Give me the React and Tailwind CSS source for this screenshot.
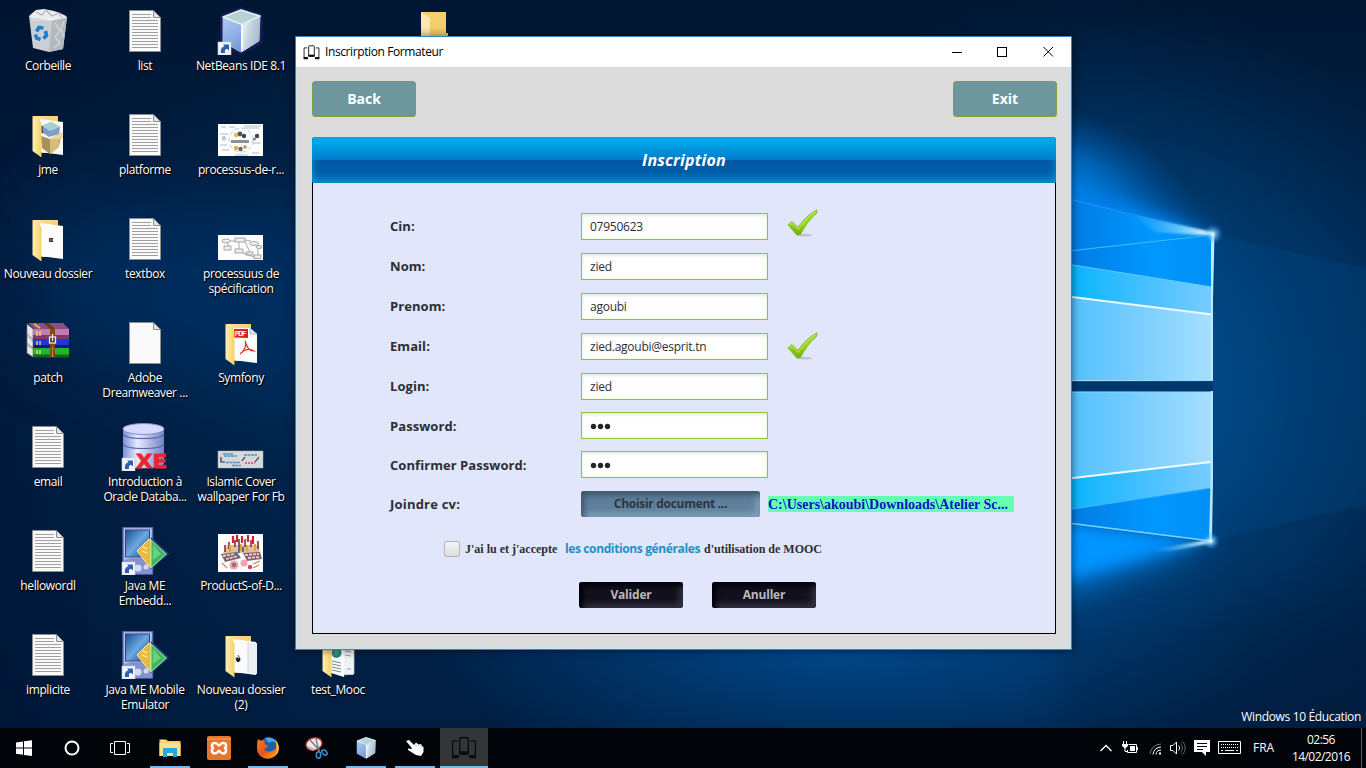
import React from "react";

/* ---------- Wallpaper and shared gradients ---------- */

function Wallpaper() {
  return (
    <svg className="absolute inset-0" width="1366" height="768" viewBox="0 0 1366 768">
      <defs>
        <linearGradient id="base" x1="0" y1="0" x2="0" y2="1">
          <stop offset="0" stopColor="#001733" />
          <stop offset="0.35" stopColor="#00274f" />
          <stop offset="0.6" stopColor="#00244a" />
          <stop offset="1" stopColor="#001d40" />
        </linearGradient>
        <linearGradient id="leftShade" x1="0" y1="0" x2="1" y2="0">
          <stop offset="0" stopColor="#001230" stopOpacity="0.55" />
          <stop offset="1" stopColor="#001230" stopOpacity="0" />
        </linearGradient>
        <radialGradient id="glowMid" gradientUnits="userSpaceOnUse" cx="1090" cy="390" r="400">
          <stop offset="0" stopColor="#0058a4" />
          <stop offset="0.35" stopColor="#004a88" stopOpacity="0.8" />
          <stop offset="0.7" stopColor="#004078" stopOpacity="0.4" />
          <stop offset="1" stopColor="#003060" stopOpacity="0" />
        </radialGradient>
        <radialGradient id="glowLow" gradientUnits="userSpaceOnUse" cx="0" cy="0" r="1" gradientTransform="translate(840 640) scale(420 150)">
          <stop offset="0" stopColor="#00498c" />
          <stop offset="1" stopColor="#00498c" stopOpacity="0" />
        </radialGradient>
        <radialGradient id="glowTop" gradientUnits="userSpaceOnUse" cx="0" cy="0" r="1" gradientTransform="translate(1050 190) rotate(14) scale(150 85)">
          <stop offset="0" stopColor="#0088f0" />
          <stop offset="0.5" stopColor="#0072d0" stopOpacity="0.7" />
          <stop offset="1" stopColor="#0050a0" stopOpacity="0" />
        </radialGradient>
        <linearGradient id="pane" x1="0" y1="0" x2="1" y2="0">
          <stop offset="0" stopColor="#4cc0ff" />
          <stop offset="0.5" stopColor="#78cdff" />
          <stop offset="1" stopColor="#a6dfff" />
        </linearGradient>
        <linearGradient id="paneCyan" x1="0" y1="0" x2="1" y2="0">
          <stop offset="0" stopColor="#00b4ff" />
          <stop offset="0.6" stopColor="#4cc0ff" />
          <stop offset="1" stopColor="#76cdff" />
        </linearGradient>
        <linearGradient id="paneBlue" x1="0" y1="0" x2="1" y2="0">
          <stop offset="0" stopColor="#0078e0" />
          <stop offset="0.6" stopColor="#0098ff" />
          <stop offset="1" stopColor="#0090f6" />
        </linearGradient>
        <linearGradient id="beam" x1="0" y1="0" x2="1" y2="0">
          <stop offset="0" stopColor="#40b0ff" stopOpacity="0" />
          <stop offset="0.6" stopColor="#7cd0ff" stopOpacity="0.8" />
          <stop offset="1" stopColor="#f4fcff" />
        </linearGradient>
        <radialGradient id="spark">
          <stop offset="0" stopColor="#fff" />
          <stop offset="0.25" stopColor="#9be0ff" stopOpacity="0.7" />
          <stop offset="1" stopColor="#1e90ff" stopOpacity="0" />
        </radialGradient>
        <filter id="b1"><feGaussianBlur stdDeviation="1" /></filter>
        <filter id="b8" x="-50%" y="-50%" width="200%" height="200%"><feGaussianBlur stdDeviation="7" /></filter>
        <filter id="b18" x="-50%" y="-50%" width="200%" height="200%"><feGaussianBlur stdDeviation="16" /></filter>
        <filter id="b40" x="-50%" y="-50%" width="200%" height="200%"><feGaussianBlur stdDeviation="36" /></filter>

        <linearGradient id="folder" x1="0" y1="0" x2="1" y2="0">
          <stop offset="0" stopColor="#fff0b0" />
          <stop offset="1" stopColor="#f5d069" />
        </linearGradient>
        <linearGradient id="folderBack" x1="0" y1="0" x2="1" y2="1">
          <stop offset="0" stopColor="#fbe59b" />
          <stop offset="1" stopColor="#eebd52" />
        </linearGradient>
        <linearGradient id="cubeL" x1="0" y1="0" x2="0.6" y2="1">
          <stop offset="0" stopColor="#b9d2f8" />
          <stop offset="1" stopColor="#6f94d6" />
        </linearGradient>
        <linearGradient id="cubeR" x1="0" y1="0" x2="1" y2="0.4">
          <stop offset="0" stopColor="#f0f7fc" />
          <stop offset="0.5" stopColor="#c5d5e2" />
          <stop offset="1" stopColor="#a8bccb" />
        </linearGradient>
        <linearGradient id="db" x1="0" y1="0" x2="1" y2="0">
          <stop offset="0" stopColor="#7f90d6" />
          <stop offset="0.35" stopColor="#e7ebff" />
          <stop offset="1" stopColor="#7484c6" />
        </linearGradient>
        <linearGradient id="screen" x1="0" y1="0" x2="1" y2="1">
          <stop offset="0" stopColor="#1b4c92" />
          <stop offset="0.5" stopColor="#6da9e0" />
          <stop offset="1" stopColor="#123c80" />
        </linearGradient>
        <linearGradient id="tick" x1="0" y1="0" x2="0" y2="1">
          <stop offset="0" stopColor="#a5dc3c" />
          <stop offset="0.5" stopColor="#9ad81e" />
          <stop offset="1" stopColor="#6fae0c" />
        </linearGradient>
        <linearGradient id="fox" x1="0" y1="0" x2="1" y2="1">
          <stop offset="0" stopColor="#f08018" />
          <stop offset="0.5" stopColor="#e8541c" />
          <stop offset="1" stopColor="#ffb020" />
        </linearGradient>
      </defs>
      <rect width="1366" height="768" fill="url(#base)" />
      <rect width="1366" height="768" fill="url(#glowMid)" />
      <rect width="1366" height="768" fill="url(#glowLow)" />
      <rect width="300" height="768" fill="url(#leftShade)" />
      <path d="M40 200L340 210V420L40 350Z" fill="#004080" opacity="0.35" filter="url(#b40)" />
      <path d="M1213 235L1366 268V505L1211 541Z" fill="#0060a8" opacity="0.16" />
      <path d="M1060 640L1366 590V768H1060Z" fill="#001a3a" opacity="0.25" filter="url(#b18)" />

      <rect x="1000" y="60" width="300" height="300" fill="url(#glowTop)" />
      <path d="M1030 175L1213 234L1030 250Z" fill="#007fe6" filter="url(#b18)" />
      <path d="M1030 175L1211 234L1030 250Z" fill="#0080ea" filter="url(#b8)" />
      <path d="M1030 525L1212 541L1030 602Z" fill="#007fe6" filter="url(#b18)" />
      <path d="M1040 520L1208 541L1040 584Z" fill="#0094ff" filter="url(#b8)" />

      <path d="M1060 198L1212 234L1060 253Z" fill="url(#paneBlue)" />
      <path d="M1060 197L1212 233.500" stroke="#30a4ff" strokeWidth="1" opacity="0.7" />
      <path d="M1130 214L1213 232V236L1155 232Z" fill="url(#beam)" filter="url(#b1)" />
      <path d="M1060 252L1212 235V287L1060 264Z" fill="url(#paneBlue)" />
      <path d="M1060 263L1212 287V315L1060 295Z" fill="url(#paneCyan)" />
      <path d="M1060 296L1212 315V381H1060Z" fill="url(#pane)" />
      <path d="M1060 252L1212 235" stroke="#3cc0ff" strokeWidth="1.2" />
      <path d="M1060 263L1212 287" stroke="#62ccff" strokeWidth="1" />
      <path d="M1060 295.500L1212 314.500" stroke="#effaff" strokeWidth="2.200" />
      <path d="M1211 235H1214.500L1213 300V381H1211Z" fill="#bdebff" />
      <path d="M1060 380.500H1213" stroke="#9adcff" strokeWidth="1" />

      <rect x="1060" y="382" width="153" height="9.500" fill="#00386e" />
      <path d="M1060 392H1212V462L1060 479Z" fill="url(#pane)" />
      <path d="M1060 479L1211 462V488L1060 511Z" fill="url(#paneCyan)" />
      <path d="M1060 511L1211 488V541L1060 523Z" fill="url(#paneBlue)" />
      <path d="M1060 479.500L1211 462" stroke="#f4fbff" strokeWidth="2" />
      <path d="M1060 511L1211 488" stroke="#3cb8ff" strokeWidth="1" />
      <path d="M1060 522L1211 541" stroke="#7bd2ff" strokeWidth="1.300" />
      <path d="M1150 550L1212 539V543L1170 551Z" fill="url(#beam)" filter="url(#b1)" />
      <path d="M1210.500 391H1213V480L1212 541H1209L1210.500 480Z" fill="#b4e8ff" />
      <path d="M1060 392H1213" stroke="#8fd8ff" strokeWidth="1" />
      <circle cx="1213" cy="234" r="10" fill="url(#spark)" />
      <circle cx="1211" cy="541" r="9" fill="url(#spark)" />
    </svg>
  );
}

/* ---------- Desktop icons (48x48) ---------- */

function Shortcut() {
  return (
    <g>
      <rect x="1" y="35" width="13" height="13" fill="#f4f6fa" stroke="#c9ced8" strokeWidth="0.6" />
      <path d="M4 46C3.500 42 5 39.800 7.500 39.600L6 37.500H12V43.500L10 41.800C8 42 7.600 43.500 8 46Z" fill="#2c5fb0" />
    </g>
  );
}

function Svg({ children }) {
  return (
    <svg className="shrink-0" width="48" height="48" viewBox="0 0 48 48">
      {children}
    </svg>
  );
}

function Page({ lines }) {
  return (
    <Svg>
      <path d="M8.500 3.500H32.500L39.500 10.500V44.500H8.500Z" fill="#fafafa" stroke="#8e8e8e" />
      <path d="M32.500 3.500V10.500H39.500Z" fill="#dfe3e8" stroke="#8e8e8e" />
      {lines && (
        <path
          d="M11 7.500H30M11 10.500H30M11 13.500H37M11 16.500H37M11 19.500H37M11 22.500H37M11 25.500H37M11 28.500H37M11 31.500H37M11 34.500H37M11 37.500H37M11 40.500H37"
          stroke="#a0a0a0"
        />
      )}
    </Svg>
  );
}

function Cube() {
  return (
    <g>
      <path d="M6 10L24 3L43 9L42 34L24 45L6 35Z" fill="url(#cubeL)" stroke="#9db7e6" strokeWidth="1" strokeLinejoin="round" />
      <path d="M25 18L43 10L42 34L25 45Z" fill="url(#cubeR)" />
      <path d="M6 10L24 3L43 9L25 17.500Z" fill="#b5d3d3" stroke="#e4f1f6" strokeWidth="1.500" strokeLinejoin="round" />
      <path d="M25 18V44" stroke="#f5fbff" strokeWidth="2" />
    </g>
  );
}

function NetBeans() {
  return (
    <Svg>
      <path d="M3 8L24 0L46 7L45 37L24 48L3 38Z" fill="#25206a" opacity="0.6" />
      <Cube />
      <Shortcut />
    </Svg>
  );
}

function Bin() {
  return (
    <Svg>
      <path d="M6 8L12 3L20 2L30 4L36 6L42 9L40 14H8Z" fill="#e9ebed" />
      <path d="M12 5L18 8L22 3L28 9L35 6L38 11" fill="none" stroke="#b0b5ba" strokeWidth="1.200" />
      <path d="M5 9L9 41L25 45L39 42L43 10L28 13Z" fill="#d6d9dc" opacity="0.95" />
      <path d="M28 13L43 10L39 42L25 45Z" fill="#b4b9be" />
      <path d="M31 16L36 24L31 30L36 36L30 41M40 14L37 22L40 30" fill="none" stroke="#d0d4d8" strokeWidth="1.500" />
      <path d="M5 9L28 13L43 10" fill="none" stroke="#f4f5f6" />
      <g fill="none" stroke="#1480d8" strokeWidth="3.600">
        <path d="M12.500 24.500L15 20.500L19.500 21" />
        <path d="M21.500 24L22.500 28.500L19.500 31.500" />
        <path d="M16.500 32.500L12.500 31L11.500 27.500" />
      </g>
    </Svg>
  );
}

function FolderBase({ children, front = true }) {
  return (
    <Svg>
      <path d="M9 5H34V42H18Z" fill="url(#folderBack)" />
      {children}
      {front && <path d="M8.500 5L17.500 12V46.500L8.500 40Z" fill="url(#folder)" />}
    </Svg>
  );
}

function FolderJme() {
  return (
    <FolderBase>
      <path d="M16 8L39 11V44L16 41Z" fill="#f8f8f8" />
      <path d="M18 15L27 11L36 16L35 23L25 26L19 22Z" fill="#7d9fc4" />
      <path d="M18 15L27 11L36 16L26 20Z" fill="#a9cfd2" />
      <path d="M18 15V21L19 22" stroke="#333" strokeWidth="1.500" fill="none" />
      <path d="M17 25L26 28L38 21L35 35L26 43L18 37Z" fill="#a98f5a" />
      <path d="M26 28L38 21L39 27L29 32Z" fill="#ecd79c" />
      <path d="M26 28V43L35 36V28Z" fill="#d6bc78" />
    </FolderBase>
  );
}

function FolderPlain({ mark }) {
  return (
    <FolderBase>
      <path d="M16 8L39 11V44L16 41Z" fill="#fbfbfb" />
      {mark === "dot" && <path d="M25 23H29V27H25Z" fill="#473c42" />}
      {mark === "dot" && <path d="M26 24H28V26H26Z" fill="#a05068" />}
      {mark === "apple" && (
        <g>
          <path d="M31 11L40 12V43L31 42Z" fill="#eceff2" />
          <path d="M31 11V43" stroke="#d8d8d8" />
          <path d="M18.500 28L20 26L21.500 27L23 26L23.500 29L22 31L20 31Z" fill="#222" />
          <path d="M21 24L22 26" stroke="#444" />
        </g>
      )}
      {mark === "docs" && (
        <g>
          <path d="M29 10L40 12V43L29 44Z" fill="#f0f3f6" stroke="#c4c9ce" strokeWidth="0.7" />
          <path d="M31 20L37 21M31 24L37 25M33 38H37" stroke="#9298a0" />
          <path d="M17 11L30 13V46L17 42Z" fill="#fcfdfd" />
          <circle cx="22.500" cy="22" r="5" fill="#2b8294" />
          <path d="M20 18L25 20L22 25Z" fill="#49a860" />
          <path d="M18 30L27 32M18 33L27 35M18 36L27 38M18 39L27 41" stroke="#7d838a" />
        </g>
      )}
    </FolderBase>
  );
}

function FolderPdf() {
  return (
    <FolderBase>
      <path d="M16 9L33 9L40 15V44L16 41Z" fill="#fbfbfb" />
      <path d="M33 9V15H40" fill="#e4e4e4" stroke="#aaa" strokeWidth="0.700" />
      <path d="M17 10L31 10V19L17 18.500Z" fill="#dc2317" />
      <text x="18" y="17" fontSize="6.500" fontWeight="700" fontFamily="Liberation Sans, sans-serif" textLength="11" fill="#fff">PDF</text>
      <path d="M28 22C31 30 32 32 37 32C32 29 27 31 23 35C27 33 30 26 28 22Z" fill="none" stroke="#dc3327" strokeWidth="1.200" />
    </FolderBase>
  );
}

function FolderClosed() {
  return (
    <Svg>
      <path d="M11 5H36V26H38V46H11Z" fill="#f3cf6d" />
      <path d="M11 5L20 11V46L11 40Z" fill="#fde9ae" />
    </Svg>
  );
}

function Thumb({ y, children }) {
  return (
    <Svg>
      <rect x="1" y={y} width="45" height={45 - y} fill="#fdfdfd" />
      {children}
    </Svg>
  );
}

function ThumbProcess() {
  return (
    <Thumb y={13}>
      <circle cx="24" cy="29" r="12" fill="none" stroke="#b9cce0" strokeWidth="1" strokeDasharray="5 2" />
      <path d="M4 16H9M12 16H18M27 15H44M3 23H11M5 29H8M3 34H10M5 39H12M18 44H31M35 42H42M27 17H42M36 32H44" stroke="#ccd2d9" strokeWidth="1.600" />
      <path d="M14 30.500H32" stroke="#8d9196" strokeWidth="3" />
      <circle cx="19" cy="24" r="2.200" fill="#e0c040" /><circle cx="23" cy="23" r="2.400" fill="#555" /><circle cx="27" cy="25" r="2.200" fill="#444" />
      <circle cx="40" cy="25" r="2.200" fill="#444" /><circle cx="37.500" cy="28" r="1.600" fill="#888" />
      <circle cx="19" cy="37" r="2.200" fill="#e0b030" /><circle cx="23.500" cy="38" r="2.200" fill="#666" /><circle cx="28" cy="36" r="1.800" fill="#c8963c" />
      <circle cx="7" cy="27" r="2" fill="#a9c8e4" />
    </Thumb>
  );
}

function ThumbSpec() {
  return (
    <Thumb y={20}>
      <g fill="#eee" stroke="#888" strokeWidth="0.700">
        <ellipse cx="9" cy="26" rx="4" ry="2" /><rect x="18" y="23" width="10" height="4" />
        <rect x="7" y="31" width="7" height="4" /><rect x="18" y="34" width="8" height="4" />
        <ellipse cx="37" cy="28.500" rx="4.500" ry="2" /><rect x="29" y="37" width="7" height="3" /><rect x="37" y="40" width="7" height="3.500" />
        <ellipse cx="42" cy="32" rx="3" ry="1.500" />
        <path d="M13 26H18M28 25L34 26M22 27V34M11 28V31M28 27L33 37M26 38L37 42M41 34V40" fill="none" />
      </g>
    </Thumb>
  );
}

function ThumbIslamic() {
  return (
    <Svg>
      <rect x="1" y="28" width="45" height="17" fill="#d5d9dc" stroke="#aeb4b8" strokeWidth="0.5" />
      <path d="M6 31H16M7 33H20M27 32H40M9 39.500H23M15 42.500H24" stroke="#4f90be" strokeWidth="1.600" strokeDasharray="3 0.600" />
      <path d="M4 34V39H8M25 38L28 34M38 39L42 34" stroke="#333" strokeWidth="1.200" fill="none" />
      <path d="M28 40H38" stroke="#d36a84" strokeWidth="1.800" strokeDasharray="2 1" />
    </Svg>
  );
}

function ThumbProducts() {
  return (
    <Thumb y={7}>
      <path d="M10 18H42L43 26H6Z" fill="#dfc09d" />
      <path d="M16 9V16M20 8V15M25 9V16M31 8V15M36 9V17" stroke="#c42836" strokeWidth="2.200" />
      <path d="M18 13V20M22 12V20M28 12V20M34 13V20M12 15V22M41 14V22M8 18V25" stroke="#8c2c36" strokeWidth="1.600" />
      <path d="M13 18V25M24 17V24M38 17V24M30 18V24" stroke="#e7a03c" strokeWidth="2" />
      <path d="M4 27L20 25L24 31L8 35Z" fill="#75606c" /><path d="M26 26L43 25L45 32L30 34Z" fill="#846068" />
      <path d="M6 29L18 27M9 32L21 29M28 28L42 27M31 31L43 30" stroke="#f0cdd6" strokeWidth="1.800" strokeDasharray="3 1" />
      <path d="M22 20V26M26 20V25" stroke="#4466a8" strokeWidth="1.800" />
      <circle cx="17" cy="38" r="4.500" fill="#e0acb4" /><circle cx="17" cy="38" r="2.300" fill="#b4606f" />
      <circle cx="27" cy="36" r="3.500" fill="#f4a0b4" /><circle cx="33" cy="40" r="2.200" fill="#c84868" />
      <path d="M36 37L43 34M36 41L42 38M5 36L10 41" stroke="#c5906c" strokeWidth="1.300" />
    </Thumb>
  );
}

function WinRar() {
  return (
    <Svg>
      <path d="M3 5L9 10V22L3 17ZM3 15L9 20V30L3 26ZM3 24L9 29V38L3 34Z" fill="#e8e8ea" stroke="#777" strokeWidth="0.700" />
      <path d="M4 4H39L45 10H10Z" fill="#8d4f82" />
      <rect x="9" y="10" width="36" height="9" fill="#c37ab2" /><rect x="9" y="16" width="36" height="4" fill="#7d3b6c" />
      <rect x="9" y="20" width="36" height="8.500" fill="#2036d8" /><rect x="9" y="26" width="36" height="3" fill="#101a80" />
      <rect x="9" y="29" width="36" height="9" fill="#25b52c" /><rect x="9" y="35.500" width="36" height="3" fill="#0c6b14" />
      <path d="M13 12V17M16 12V17M13 22V26M16 22V26M13 31V35M16 31V35" stroke="#f3dc5c" strokeWidth="1.400" />
      <path d="M10 5L16 9" stroke="#d8c820" strokeWidth="2" />
      <path d="M19 4H25L31 10H26Z" fill="#6c3f12" /><rect x="26" y="10" width="5" height="28" fill="#7d4a18" />
      <path d="M28.500 28V38" stroke="#c48a40" />
      <rect x="25.500" y="18" width="6" height="6" fill="#553311" stroke="#e8e8e8" strokeWidth="1.300" />
      <path d="M28.500 15V22" stroke="#f3f3f3" strokeWidth="1.300" />
    </Svg>
  );
}

function OracleXe() {
  return (
    <Svg>
      <path d="M2 6V40C2 47 43 47 43 40V6Z" fill="url(#db)" />
      <ellipse cx="22.500" cy="6" rx="20.500" ry="5.500" fill="#d5dbfa" stroke="#8390c6" />
      <path d="M2 11C5 17 40 17 43 11M2 21C5 27 40 27 43 21" fill="none" stroke="#5664a4" strokeWidth="1.200" />
      <text x="15" y="44.500" fontSize="20" fontWeight="700" fontFamily="DejaVu Sans, sans-serif" textLength="31" lengthAdjust="spacingAndGlyphs" fill="#e82630" stroke="#e82630" strokeWidth="0.800">XE</text>
      <Shortcut />
    </Svg>
  );
}

function JavaMe() {
  return (
    <Svg>
      <path d="M2 0.500H31.500V47H2Z" fill="#b9c5ee" stroke="#5669ac" strokeWidth="1.400" />
      <rect x="4.500" y="3" width="24" height="27" fill="url(#screen)" stroke="#2d447e" />
      <path d="M2 34C12 29 22 29 31 34V47H2Z" fill="#8493cf" />
      <circle cx="17" cy="41" r="3.500" fill="#d3dcfa" /><circle cx="25" cy="40" r="2.500" fill="#d3dcfa" />
      <path d="M30 10L48 27L30 42Z" fill="#2a4a84" />
      <path d="M16 24L28 12L30 13V40L27 38Z" fill="#e9b93c" stroke="#fbe9a8" />
      <path d="M22 20L26 22M21 24L26 26" stroke="#fff4c8" strokeWidth="1.300" />
      <path d="M30 13L45 27L30 41Z" fill="#3eb85a" stroke="#a4ecb0" />
      <path d="M32 18L40 27L32 33Z" fill="#80dc8e" opacity="0.7" />
      <Shortcut />
    </Svg>
  );
}

const page = <Page lines />;
const desktop = [
  [{ icon: <Bin />, label: ["Corbeille"] }, { icon: page, label: ["list"] }, { icon: <NetBeans />, label: ["NetBeans IDE 8.1"] }, null, { icon: <FolderClosed />, label: [] }],
  [{ icon: <FolderJme />, label: ["jme"] }, { icon: page, label: ["platforme"] }, { icon: <ThumbProcess />, label: ["processus-de-r..."] }, null, null],
  [{ icon: <FolderPlain mark="dot" />, label: ["Nouveau dossier"] }, { icon: page, label: ["textbox"] }, { icon: <ThumbSpec />, label: ["processuus de", "spécification"] }, null, null],
  [{ icon: <WinRar />, label: ["patch"] }, { icon: <Page />, label: ["Adobe", "Dreamweaver ..."] }, { icon: <FolderPdf />, label: ["Symfony"] }, null, null],
  [{ icon: page, label: ["email"] }, { icon: <OracleXe />, label: ["Introduction à", "Oracle Databa..."] }, { icon: <ThumbIslamic />, label: ["Islamic Cover", "wallpaper For Fb"] }, null, null],
  [{ icon: page, label: ["hellowordl"] }, { icon: <JavaMe />, label: ["Java ME", "Embedd..."] }, { icon: <ThumbProducts />, label: ["ProductS-of-D..."] }, null, null],
  [{ icon: page, label: ["implicite"] }, { icon: <JavaMe />, label: ["Java ME Mobile", "Emulator"] }, { icon: <FolderPlain mark="apple" />, label: ["Nouveau dossier", "(2)"] }, { icon: <FolderPlain mark="docs" />, label: ["test_Mooc"] }, null],
];

function Desktop() {
  return (
    <div className="relative grid w-[480px] grid-cols-[96px_98px_94px_100px_92px] auto-rows-[104px]">
      {desktop.flat().map((item, i) => (
        <div key={i} className="flex flex-col items-center pt-[7px]">
          {item && item.icon}
          {item && (
            <div className="mt-[3px] flex flex-col items-center text-[12px] leading-[15px] tracking-[-0.38px] whitespace-nowrap text-white [text-shadow:0_1px_2px_#000,1px_1px_1px_#000]">
              {item.label.map((l) => <span key={l}>{l}</span>)}
            </div>
          )}
        </div>
      ))}
    </div>
  );
}

/* ---------- Application window ---------- */

function Phones({ className, size, color }) {
  return (
    <svg className={className} width={size} height={size} viewBox="0 0 24 24" fill="none" stroke={color}>
      <rect x="8" y="2.500" width="8" height="15" rx="1.200" strokeWidth="1.300" />
      <path d="M8 15.500H16V17.500H8Z" fill={color} />
      <path d="M6 5.500H1.500V20.500H7M18 5.500H22.500V20.500H17" strokeWidth="1.200" />
      <path d="M1 18.500H7V21.500H1ZM17 18.500H23V21.500H17Z" fill={color} strokeWidth="0" />
    </svg>
  );
}

function Tick({ className }) {
  return (
    <svg className={className} width="32" height="30" viewBox="0 0 32 30">
      <ellipse cx="17" cy="26.200" rx="8" ry="1.200" fill="#7c86a8" opacity="0.4" />
      <path d="M1 16L5 12.500L11 18.500C16 11 22 5 30 0.800V4C23 9.500 18 17 13.500 25.500L10 26Z" fill="url(#tick)" stroke="#7db824" strokeWidth="0.800" />
      <path d="M3 16L5 14.300L11 20.500C17 12.500 22 7 28 3" fill="none" stroke="#cdf17c" strokeWidth="1" opacity="0.8" />
    </svg>
  );
}

const fields = [
  { label: "Cin:", value: "07950623", tick: "mt-[-4px]", gap: "mb-[13px]" },
  { label: "Nom:", value: "zied", gap: "mb-[13px]" },
  { label: "Prenom:", value: "agoubi", gap: "mb-[13px]" },
  { label: "Email:", value: "zied.agoubi@esprit.tn", tick: "mt-[-1px]", gap: "mb-[13px]" },
  { label: "Login:", value: "zied", gap: "mb-[12px]" },
  { label: "Password:", dots: true, gap: "mb-[12px]" },
  { label: "Confirmer Password:", dots: true, gap: "mb-[13px]" },
];

function Field({ label, value, dots, tick, gap }) {
  return (
    <div className={`flex h-[27px] ${gap}`}>
      <div className={`w-[191px] text-[13px] font-bold tracking-[0.06px] ${dots ? "leading-[28px]" : "leading-[26px]"}`}>{label}</div>
      <div className="flex h-[27px] w-[187px] items-center border border-[#8cc63f] bg-white pl-2 text-[12px] tracking-[-0.25px] shadow-[inset_0_2px_3px_#e6ece2,inset_0_0_2px_#d8f09c]">
        {dots ? (
          <svg width="22" height="8" viewBox="0 0 22 8" fill="#262626">
            <circle cx="3.500" cy="4.500" r="2.700" /><circle cx="10.500" cy="4.500" r="2.700" /><circle cx="17.500" cy="4.500" r="2.700" />
          </svg>
        ) : (
          <span>{value}</span>
        )}
      </div>
      {tick && <Tick className={`ml-[19px] ${tick}`} />}
    </div>
  );
}

function TopButton({ children }) {
  return (
    <button className="h-9 w-[104px] rounded-[3px] border border-[#7da344] bg-[#6d979d] pb-px text-[14px] font-bold text-white shadow-[inset_0_-1px_0_#75996a]">
      {children}
    </button>
  );
}

function DarkButton({ children }) {
  return (
    <button className="h-[26px] w-[104px] rounded-[3px] bg-[#12101c] text-[12px] font-bold tracking-[-0.2px] text-[#b9b9bd] shadow-[inset_4px_4px_5px_#02010a,inset_-4px_-4px_6px_#343142]">
      {children}
    </button>
  );
}

function AppWindow() {
  return (
    <div className="absolute top-9 left-[295px] flex h-[614px] w-[777px] flex-col border border-[#3484c4] bg-[#dcdcdc] text-[#2c2e33] shadow-[0_0_9px_rgba(0,0,0,0.55)]">
      <div className="flex h-[30px] shrink-0 items-center bg-white pl-[7px] text-[12px] text-black">
        <Phones size={17} color="#111" />
        <span className="ml-[5px] tracking-[-0.4px]">Inscrirption Formateur</span>
        <svg className="ml-auto mr-4" width="104" height="12" viewBox="0 0 104 12" fill="none" stroke="#000">
          <path d="M1 6.500H11M92.500 1L102 10.500M102 1L92.500 10.500" />
          <rect x="46.500" y="1.500" width="9" height="9" />
        </svg>
      </div>
      <div className="flex grow flex-col border border-t-0 border-[#c6e6f6] pt-[14px] pr-[13px] pl-[15px]">
        <div className="flex justify-between">
          <TopButton>Back</TopButton>
          <TopButton>Exit</TopButton>
        </div>
        <div className="relative mt-5 flex h-[46px] w-[744px] items-center justify-center rounded-[3px] bg-[linear-gradient(180deg,#00b8f0_0%,#0096e0_25%,#007cc8_50%,#0058a4_50%,#005ca8_75%,#0078be_100%)] text-[16px] font-bold tracking-[0.22px] text-white italic shadow-[inset_0_0_8px_#00a0d8,inset_0_0_1px_#0a5c88]">
          Inscription
        </div>
        <div className="-mt-px h-[452px] w-[744px] border border-t-0 border-black bg-[#e1e6fa] pt-[31px] pl-[77px]">
          {fields.map((f) => <Field key={f.label} {...f} />)}
          <div className="flex h-[26px] items-center">
            <div className="w-[191px] pt-px text-[13px] font-bold tracking-[0.2px]">Joindre cv:</div>
            <button className="h-[26px] w-[179px] rounded-[3px] bg-[#5f809c] text-[12px] font-bold tracking-[-0.3px] text-[#2c3640] shadow-[inset_3px_4px_6px_#3c5268,inset_-4px_-4px_6px_#83a2bc]">
              Choisir document ...
            </button>
            <div className="ml-2 h-4 w-[246px] bg-[#66ffb4] font-['Liberation_Serif',serif] text-[14px] leading-[17px] font-bold whitespace-nowrap text-[#0a14c8]">
              C:\Users\akoubi\Downloads\Atelier Sc...
            </div>
          </div>
          <div className="mt-6 ml-[54px] flex h-4 items-center font-['Liberation_Serif',serif] text-[12px] leading-4 font-bold whitespace-nowrap">
            <span className="h-4 w-4 rounded-[2px] border border-[#b4b4b8] bg-linear-to-b from-[#f4f4f4] to-[#dedede]" />
            <span className="ml-[5px] w-[100px]">J'ai lu et j'accepte</span>
            <span className="w-[139px] font-['Open_Sans',sans-serif] tracking-[-0.38px] text-[#1e90c8]">les conditions générales</span>
            <span>d'utilisation de MOOC</span>
          </div>
          <div className="mt-[25px] ml-[189px] flex gap-[29px]">
            <DarkButton>Valider</DarkButton>
            <DarkButton>Anuller</DarkButton>
          </div>
        </div>
      </div>
    </div>
  );
}

/* ---------- Taskbar ---------- */

function Task({ icon, running, active }) {
  return (
    <div className={`relative flex h-10 w-12 items-center justify-center ${active ? "bg-[#333639]" : ""}`}>
      {icon}
      {running && <div className={`absolute bottom-0 h-[2px] bg-[#76b9ed] ${active ? "w-12" : "w-10"}`} />}
    </div>
  );
}

const T = ({ children }) => <svg width="24" height="24" viewBox="0 0 24 24" fill="none">{children}</svg>;

function Taskbar() {
  return (
    <div className="absolute bottom-0 left-0 flex h-10 w-full items-center bg-[#010408] text-[12px] text-white">
      <Task icon={<T><path d="M4 6.500L11 5.500V11.500H4ZM12 5.300L20 4.200V11.500H12ZM4 12.500H11V18.800L4 17.800ZM12 12.500H20V20L12 18.900Z" fill="#fff" /></T>} />
      <Task icon={<T><circle cx="12" cy="12" r="6.500" stroke="#fff" strokeWidth="2" /></T>} />
      <Task icon={<T><path d="M6.500 5.500H17.500V18.500H6.500ZM5 7.500H2.500V16.500H5M19 7.500H21.500V16.500H19" stroke="#fff" /></T>} />
      <div className="ml-[2px] flex gap-px">
        <Task running icon={<T><path d="M1.500 3.500H8L10 5H22.500V20H1.500Z" fill="#f6cf62" /><path d="M1.500 7H22.500V20H1.500Z" fill="#fde08a" /><path d="M5 12H19V21H15V17H9V21H5Z" fill="#23a8e4" /><path d="M3 4.500H7" stroke="#fff3c0" /></T>} />
        <Task icon={<T><rect width="24" height="24" rx="2" fill="#e5762a" /><path d="M0 3H24" stroke="#f6a368" /><path d="M8 7C4 7 4 11.500 7 12C4 12.500 4 17.500 8 17.500C11 17.500 10.500 15 12 15C13.500 15 13 17.500 16 17.500C20 17.500 20 12.500 17 12C20 11.500 20 7 16 7C13 7 13.500 9.500 12 9.500C10.500 9.500 11 7 8 7Z" stroke="#fff" strokeWidth="2.400" /></T>} />
        <Task running icon={<T><circle cx="13" cy="10.500" r="9.500" fill="#1d5fa8" /><path d="M9 2C13 1 19 2 21 7C17 5 15 5 13 7Z" fill="#4ba8dc" /><path d="M2 3C4 5 6 4 9 5C7 8 10 9 12 10C11 13 8 12 8 13C11 17 18 16 20 12C21 9 20 6 19 4C24 8 24 16 19 20C13 25 2 23 1 13C1 9 1 6 2 3Z" fill="url(#fox)" /><path d="M19 4C24 8 24 16 19 20C22 15 21 9 19 4Z" fill="#fcc33c" /></T>} />
        <Task icon={<T><ellipse cx="9" cy="8" rx="8" ry="6" transform="rotate(-15 9 8)" fill="#e8e8ea" stroke="#c83838" strokeWidth="1.300" /><path d="M3 11L9 14" stroke="#b3b7bc" strokeWidth="2" /><path d="M5 4L15 15M11 3L14 16" stroke="#707880" strokeWidth="1.300" /><ellipse cx="13.500" cy="19" rx="2.200" ry="3.200" stroke="#3592d4" strokeWidth="1.500" /><ellipse cx="19.500" cy="16.500" rx="3" ry="2" transform="rotate(45 19.500 16.500)" stroke="#3592d4" strokeWidth="1.500" /></T>} />
        <Task running icon={<svg width="24" height="24" viewBox="0 0 48 48"><Cube /></svg>} />
        <Task running icon={<T><path d="M3 5L6 4L11 9L13 6.500L15.500 8.500L18 8L19 10L20.500 11L20.500 16L18 20L13 19L5 14L5 12.500L9 13L8 11Z" fill="#fff" /><path d="M12 8.500L14 11M15 8.500L16.500 11M17.500 9L19 12" stroke="#a5a5a5" strokeWidth="0.600" /></T>} />
        <Task running active icon={<Phones size={26} color="#0a0b0c" />} />
      </div>
      <svg className="ml-auto" width="146" height="24" viewBox="1097 736 146 24" fill="none" stroke="#fff">
        <path d="M1100.500 751L1106 745.500L1111.500 751" strokeWidth="1.300" />
        <path d="M1128.500 744.500H1136.500V752.500H1127.500V750" /><path d="M1130 746H1135V751H1130Z" fill="#fff" stroke="none" /><path d="M1137.500 747V750M1123.500 741V744M1126.500 741V744M1125 747V751.500H1128" /><path d="M1122 744H1128V746L1125 748.500L1122 746Z" fill="#fff" stroke="none" />
        <path d="M1150 754A11 11 0 0 1 1161 744" stroke="#777" /><path d="M1153 754.500A8 8 0 0 1 1161 747" /><path d="M1156 754.500A5 5 0 0 1 1161 750" /><path d="M1159 752.500H1161V754.500H1159Z" fill="#fff" stroke="none" />
        <path d="M1170.500 745.500H1173L1176.500 742V754L1173 750.500H1170.500Z" /><path d="M1178.500 745.500C1180 747 1180 749 1178.500 750.500" /><path d="M1180.500 743.500C1183 746 1183 750 1180.500 752.500M1182.500 741.500C1186 745 1186 751 1182.500 754.500" stroke="#666" />
        <path d="M1194 740H1210V752H1206V756L1202 752H1194Z" fill="#fff" stroke="none" /><path d="M1197 743.500H1207M1197 746.500H1207M1197 749.500H1203" stroke="#010408" />
        <path d="M1218.500 741.500H1240.500V753.500H1218.500Z" /><path d="M1221 744.500H1239M1221 747.500H1239" strokeDasharray="1 1" /><path d="M1221 750.500H1223M1225 750.500H1234M1236 750.500H1238" />
      </svg>
      <span className="ml-[10px] w-[22px]">FRA</span>
      <div className="ml-[14px] flex w-[64px] flex-col items-center leading-[17px] tracking-[-0.55px]">
        <span>02:56</span>
        <span>14/02/2016</span>
      </div>
      <div className="ml-2 h-10 w-[5px] border-l border-[#5a5e63]" />
    </div>
  );
}

export default function App() {
  return (
    <div className="relative h-[768px] w-[1366px] overflow-hidden bg-[#001d3c] font-['Open_Sans',sans-serif]">
      <Wallpaper />
      <Desktop />
      <AppWindow />
      <div className="absolute right-[5px] bottom-[43px] text-[12px] leading-4 tracking-[-0.35px] text-white">Windows 10 Éducation</div>
      <Taskbar />
    </div>
  );
}
